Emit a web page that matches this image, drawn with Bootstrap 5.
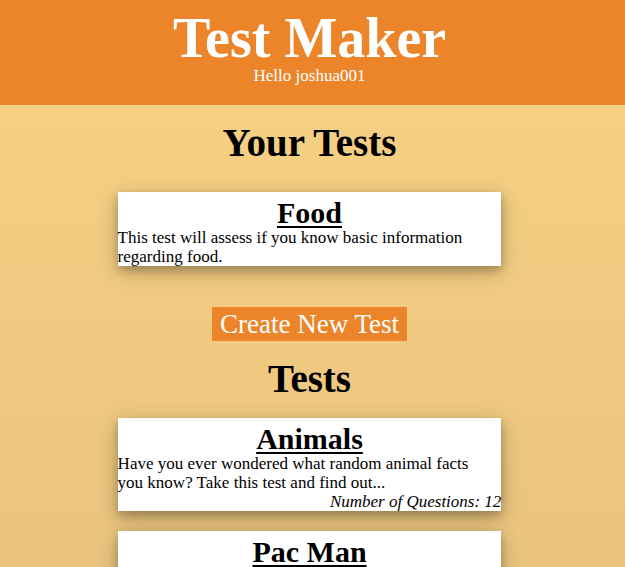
<!DOCTYPE html>
<html lang="en">
<head>
<meta charset="utf-8">
<meta name="viewport" content="width=device-width, initial-scale=1">
<title>Test Maker</title>
<link href="https://cdn.jsdelivr.net/npm/bootstrap@5.3.0/dist/css/bootstrap.min.css" rel="stylesheet">
<style>
body { font-family: "Liberation Serif", serif; font-size: 17px; line-height: 19px; color: #000; background: linear-gradient(#f8d284, #eac47e); }
.site-header { background: #ec8529; padding: 10px 6px 20px 0; }
.site-title { font-size: 56px; line-height: 56px; font-weight: 700; }
.tests-area { padding-right: 6px; }
.section-title { font-size: 39px; line-height: 36px; font-weight: 700; }
.test-card { width: 62%; min-height: 74px; background: #fff; padding-top: 6px; box-shadow: 0 4px 8px rgba(0, 0, 0, .2), 0 6px 20px rgba(0, 0, 0, .25); }
.test-name { font-size: 30px; line-height: 30px; font-weight: 700; }
.test-name a { color: #000; text-decoration-thickness: 2px; text-underline-offset: 3px; }
.test-summary { padding-right: 12px; }
.create-btn { font-size: 27px; line-height: 34px; color: #fff; background: #ec8529; padding: 0 8px; }
.section-yours { padding: 20px 0 41px; }
.section-yours .section-title { margin-bottom: 31px; }
.section-all { padding-top: 20px; }
.section-all .section-title { margin-bottom: 21px; }
.section-all .test-card { margin-bottom: 20px; }
</style>
<script src="https://cdn.jsdelivr.net/npm/bootstrap@5.3.0/dist/js/bootstrap.bundle.min.js"></script>
</head>
<body class="vh-100 overflow-hidden">
<header class="site-header text-center text-white">
  <h1 class="site-title m-0">Test Maker</h1>
  <p class="m-0">Hello joshua001</p>
</header>
<main class="tests-area">
  <section class="section-yours">
    <h2 class="section-title text-center mt-0">Your Tests</h2>
    <article class="test-card mx-auto">
      <h3 class="test-name text-center m-0"><a href="#food">Food</a></h3>
      <p class="test-summary m-0">This test will assess if you know basic information regarding food.</p>
    </article>
  </section>
  <div class="d-flex justify-content-center">
    <button type="button" class="create-btn border-0">Create New Test</button>
  </div>
  <section class="section-all">
    <h2 class="section-title text-center mt-0">Tests</h2>
    <article class="test-card mx-auto">
      <h3 class="test-name text-center m-0"><a href="#animals">Animals</a></h3>
      <p class="test-summary m-0">Have you ever wondered what random animal facts you know? Take this test and find out...</p>
      <p class="m-0 text-end fst-italic">Number of Questions: 12</p>
    </article>
    <article class="test-card mx-auto">
      <h3 class="test-name text-center m-0"><a href="#pac-man">Pac Man</a></h3>
    </article>
  </section>
</main>
</body>
</html>
